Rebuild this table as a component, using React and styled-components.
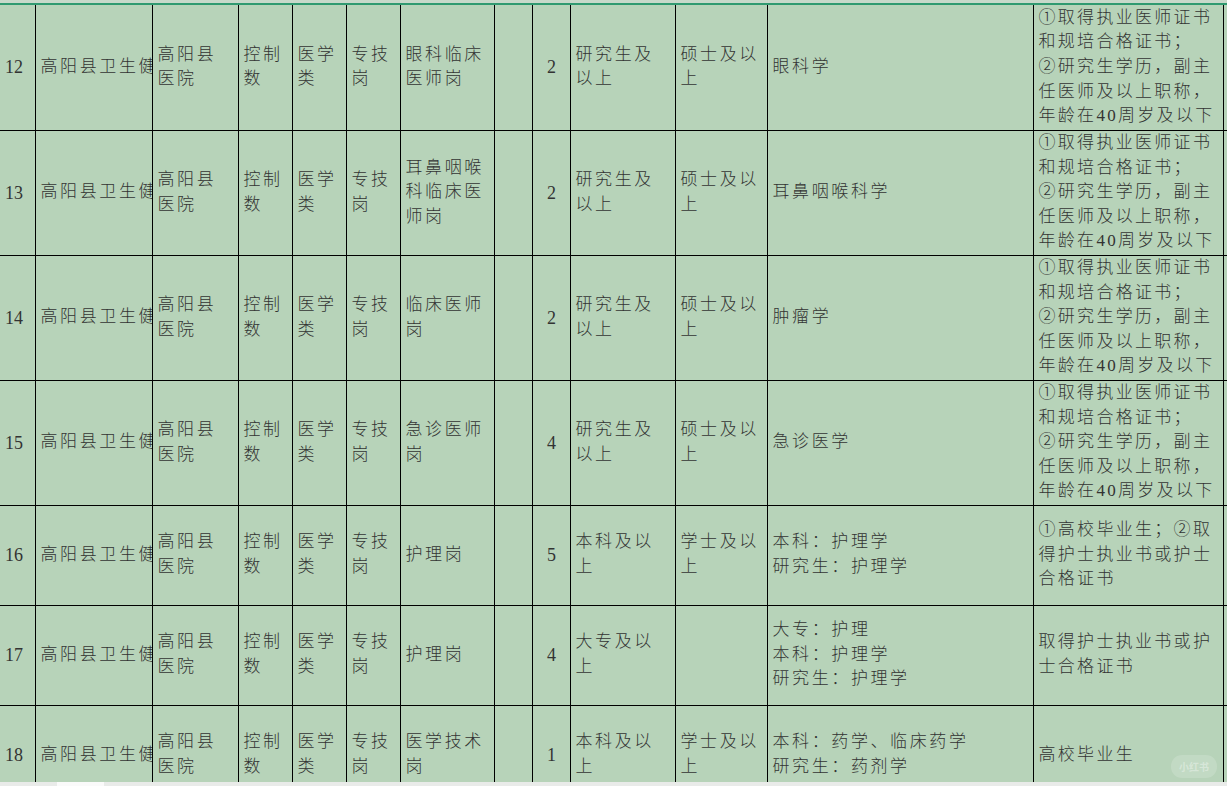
import styled, { createGlobalStyle } from "styled-components";

const GlobalStyle = createGlobalStyle`
	html, body {
		margin: 0;
		padding: 0;
		background: #b7d3b9;
	}
`;

const REQ_DOCTOR = [
	"①取得执业医师证书",
	"和规培合格证书；",
	"②研究生学历，副主",
	"任医师及以上职称，",
	"年龄在40周岁及以下",
];

const rows = [
	{ n: 12, h: 125, post: ["眼科临床", "医师岗"], count: 2, edu: ["研究生及", "以上"], degree: ["硕士及以", "上"], major: ["眼科学"], req: REQ_DOCTOR },
	{ n: 13, h: 125, post: ["耳鼻咽喉", "科临床医", "师岗"], count: 2, edu: ["研究生及", "以上"], degree: ["硕士及以", "上"], major: ["耳鼻咽喉科学"], req: REQ_DOCTOR },
	{ n: 14, h: 125, post: ["临床医师", "岗"], count: 2, edu: ["研究生及", "以上"], degree: ["硕士及以", "上"], major: ["肿瘤学"], req: REQ_DOCTOR },
	{ n: 15, h: 125, post: ["急诊医师", "岗"], count: 4, edu: ["研究生及", "以上"], degree: ["硕士及以", "上"], major: ["急诊医学"], req: REQ_DOCTOR },
	{ n: 16, h: 100, post: ["护理岗"], count: 5, edu: ["本科及以", "上"], degree: ["学士及以", "上"], major: ["本科：护理学", "研究生：护理学"], req: ["①高校毕业生；②取", "得护士执业书或护士", "合格证书"] },
	{ n: 17, h: 100, post: ["护理岗"], count: 4, edu: ["大专及以", "上"], degree: [], major: ["大专：护理", "本科：护理学", "研究生：护理学"], req: ["取得护士执业书或护", "士合格证书"] },
	{ n: 18, h: 100, post: ["医学技术", "岗"], count: 1, edu: ["本科及以", "上"], degree: ["学士及以", "上"], major: ["本科：药学、临床药学", "研究生：药剂学"], req: ["高校毕业生"] },
];

const colWidths = [35, 117, 86, 54, 54, 54, 94, 38, 38, 105, 92, 266, 190, 40];

const Lines = ({ lines }) =>
	lines.map((l, i) => <Line key={i}>{l}</Line>);

const App = () => {
	return (<>
		<GlobalStyle />
		<Page>
			<TopStrip />
			<GreenRule />
			<Sheet>
				<Table>
					<colgroup>
						{colWidths.map((w, i) => <col key={i} style={{ width: w }} />)}
					</colgroup>
					<tbody>
						{rows.map((r, idx) => (
							<Row key={r.n} $h={r.h} $first={idx === 0}>
								<NumCell $first>{r.n}</NumCell>
								<Cell>高阳县卫生健康局</Cell>
								<Cell><Lines lines={["高阳县", "医院"]} /></Cell>
								<Cell><Lines lines={["控制", "数"]} /></Cell>
								<Cell><Lines lines={["医学", "类"]} /></Cell>
								<Cell><Lines lines={["专技", "岗"]} /></Cell>
								<Cell><Lines lines={r.post} /></Cell>
								<Cell />
								<NumCell $center>{r.count}</NumCell>
								<Cell><Lines lines={r.edu} /></Cell>
								<Cell><Lines lines={r.degree} /></Cell>
								<Cell><Lines lines={r.major} /></Cell>
								<Cell $tight><Lines lines={r.req} /></Cell>
								<Cell />
							</Row>
						))}
					</tbody>
				</Table>
				<Watermark>小红书</Watermark>
			</Sheet>
			<BottomBar>
				<SheetTab />
			</BottomBar>
		</Page>
	</>);
};

const Page = styled.div`
	display: flex;
	flex-direction: column;
	width: 1227px;
	height: 786px;
	overflow: hidden;
	background: #b7d3b9;
`;

const TopStrip = styled.div`
	height: 3px;
	background: #c7d9ca;
`;

const GreenRule = styled.div`
	height: 2px;
	background: #2f9a70;
`;

const Sheet = styled.div`
	position: relative;
	flex: 1;
	overflow: hidden;
`;

const Table = styled.table`
	table-layout: fixed;
	width: 1263px;
	border-collapse: collapse;
	font-family: "Liberation Serif", "Noto Sans CJK SC", serif;
	color: #333;
	font-weight: 300;
`;

const Row = styled.tr`
	height: ${(p) => p.$h}px;
	td {
		border-top: ${(p) => (p.$first ? "none" : "1px solid #000")};
	}
`;

const Cell = styled.td`
	border: 1px solid #000;
	padding: 0 3px 0 5px;
	vertical-align: middle;
	white-space: nowrap;
	overflow: hidden;
	font-size: 17px;
	line-height: 24.6px;
	letter-spacing: ${(p) => (p.$tight ? "2.3px" : "2.6px")};
`;

const NumCell = styled.td`
	border: 1px solid #000;
	border-left: ${(p) => (p.$first ? "none" : "1px solid #000")};
	padding: 0 4px 0 5px;
	vertical-align: middle;
	text-align: ${(p) => (p.$center ? "center" : "left")};
	font-size: 18px;
	font-weight: 400;
	line-height: 24px;
`;

const Line = styled.div`
	white-space: nowrap;
`;

const Watermark = styled.div`
	position: absolute;
	right: 10px;
	bottom: 4px;
	padding: 4px 8px;
	border-radius: 11px;
	background: rgba(255, 255, 255, 0.16);
	color: rgba(255, 255, 255, 0.35);
	font-family: "Noto Sans CJK SC", sans-serif;
	font-size: 10px;
	font-weight: 700;
`;

const BottomBar = styled.div`
	display: flex;
	height: 4px;
	padding-left: 57px;
	background: #e9ebe9;
`;

const SheetTab = styled.div`
	width: 47px;
	background: #fafafa;
`;

export default App;
